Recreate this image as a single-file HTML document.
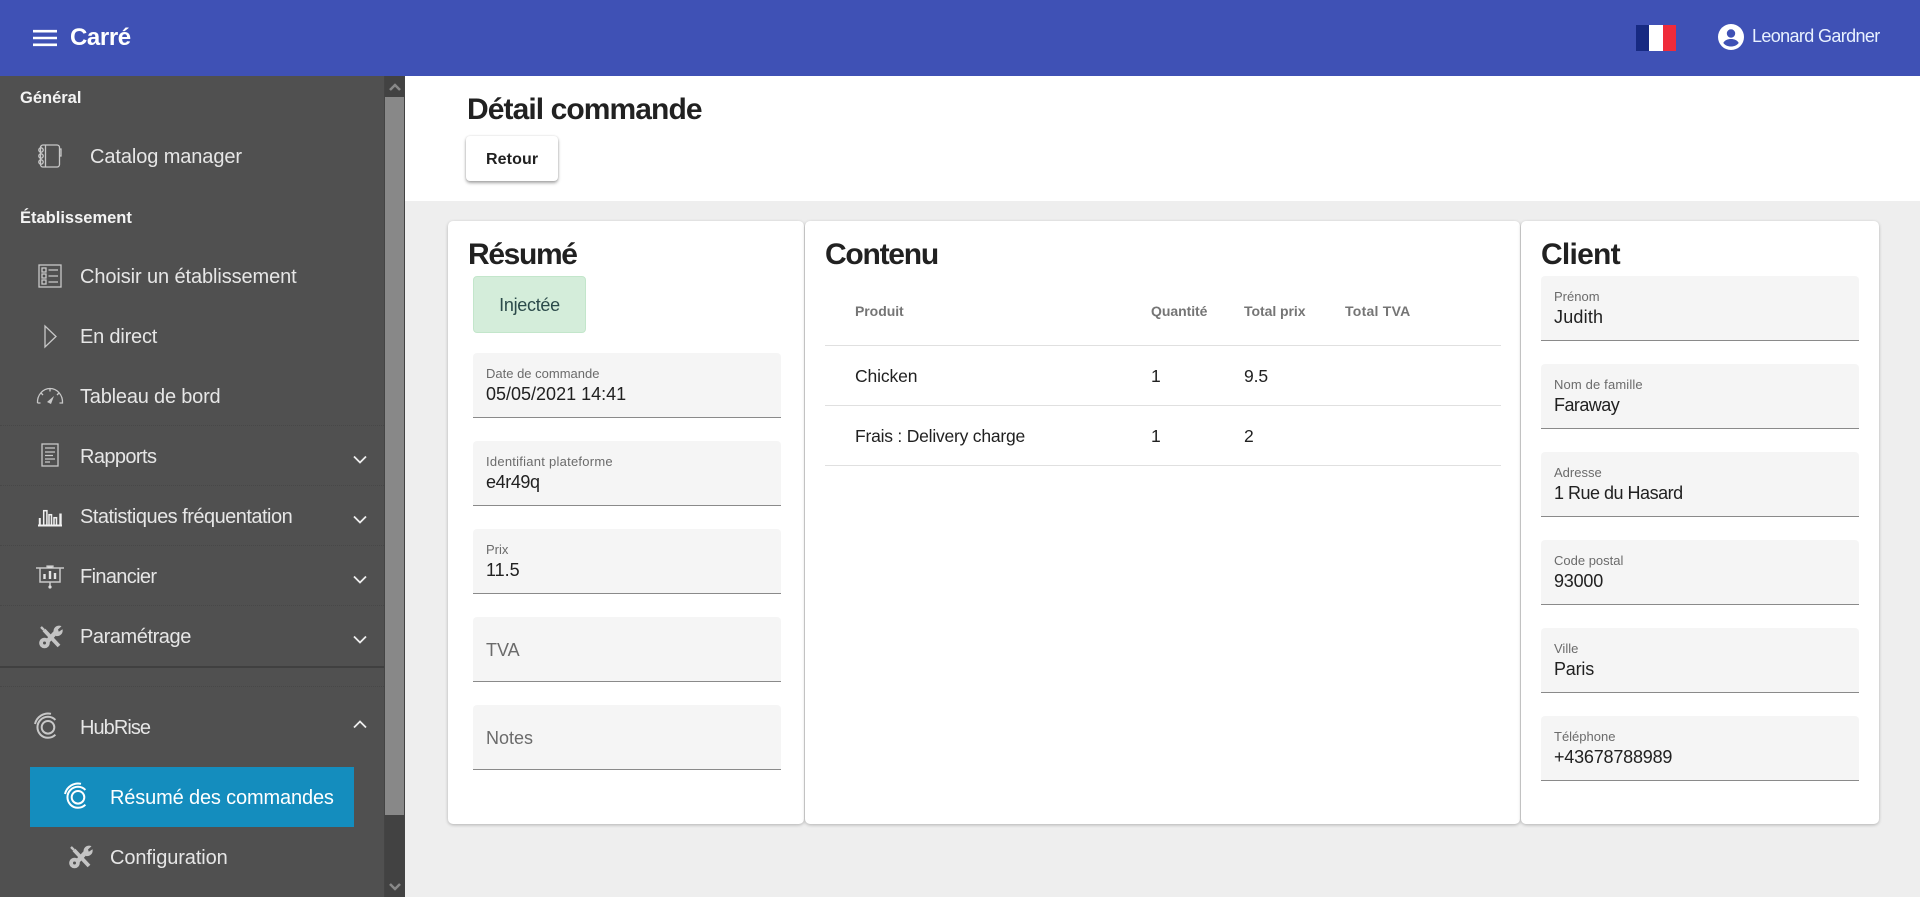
<!DOCTYPE html>
<html lang="fr"><head><meta charset="utf-8"><title>Détail commande</title>
<style>
html,body{margin:0;padding:0;width:1920px;height:897px;overflow:hidden;background:#eee;font-family:"Liberation Sans",Arial,sans-serif;color:#212121}
.a{position:absolute}
.t{position:absolute;white-space:nowrap;line-height:24px;height:24px}
.nav{color:#e6e6e6;font-size:20px;letter-spacing:-.1px}
.sec{color:#f4f4f4;font-size:16.5px;font-weight:bold;letter-spacing:0}
.dot{position:absolute;left:0;width:384px;height:0;border-top:1px dotted #474747}
.card{position:absolute;top:221px;height:603px;background:#fff;border-radius:5px;box-shadow:0 1px 3px rgba(0,0,0,.25)}
.h{font-size:30px;font-weight:bold;letter-spacing:-.75px;color:#212121;line-height:36px;height:36px}
.f{position:absolute;height:64px;background:#f5f5f5;border-radius:4px 4px 0 0;border-bottom:1px solid #8a8a8a}
.f .l{position:absolute;left:13px;top:13px;font-size:13px;line-height:16px;color:#6b6b6b;white-space:nowrap}
.f .v{position:absolute;left:13px;top:30px;font-size:18px;line-height:22px;color:#212121;white-space:nowrap}
.f .e{position:absolute;left:13px;top:21px;font-size:18px;line-height:24px;color:#6b6b6b}
.th{font-size:14px;font-weight:bold;color:#757575;letter-spacing:-.05px}
.td{font-size:17.5px;color:#212121;letter-spacing:-.12px}
.ln{position:absolute;left:825px;width:676px;height:1px;background:#e0e0e0}
svg{position:absolute;overflow:visible;fill:none}
.ic{stroke:#c8c8c8;stroke-width:1.3}
.dith{background-color:#444;background-image:radial-gradient(#3a3a3a 35%,transparent 40%);background-size:2px 2px}
</style></head><body>

<!-- top bar -->
<div class="a" style="left:0;top:0;width:1920px;height:76px;background:#3f51b5"></div>
<svg style="left:33px;top:30px" width="24" height="16"><path d="M0 1.2H24M0 8H24M0 14.8H24" stroke="#fff" stroke-width="2.6"/></svg>
<div class="t" style="left:70px;top:26px;font-size:24px;font-weight:bold;color:#fff;letter-spacing:-.4px">Carré</div>
<div class="a" style="left:1636px;top:25px;width:13px;height:26px;background:#172a82"></div>
<div class="a" style="left:1649px;top:25px;width:14px;height:26px;background:#fff"></div>
<div class="a" style="left:1663px;top:25px;width:13px;height:26px;background:#ef2b3a"></div>
<svg style="left:1718px;top:24px" width="26" height="26" viewBox="0 0 26 26"><circle cx="13" cy="13" r="13" fill="#fff"/><circle cx="13" cy="9.5" r="4.2" fill="#3f51b5"/><path d="M5.3 19c1.2-2.7 4.5-4 7.7-4s6.5 1.300 7.700 4c-1.700 2.200-4.500 3.500-7.700 3.500s-6-1.300-7.700-3.500z" fill="#3f51b5"/></svg>
<div class="t" style="left:1752px;top:24px;font-size:18px;color:#e8f1ff;letter-spacing:-.63px">Leonard Gardner</div>

<!-- sidebar -->
<div class="a" style="left:0;top:76px;width:384px;height:821px;background:#505050"></div>
<div class="a" style="left:384px;top:76px;width:1px;height:821px;background:#444"></div>
<div class="a dith" style="left:385px;top:76px;width:20px;height:821px"></div>
<div class="a" style="left:385px;top:97px;width:19px;height:718px;background:#888"></div>
<svg style="left:389px;top:83px" width="12" height="8"><path d="M1 7L6 2L11 7" stroke="#888" stroke-width="2.5"/></svg>
<svg style="left:389px;top:883px" width="12" height="8"><path d="M1 1L6 6L11 1" stroke="#888" stroke-width="2.5"/></svg>

<div class="t sec" style="left:20px;top:86px">Général</div>
<div class="t nav" style="left:90px;top:145px">Catalog manager</div>
<div class="t sec" style="left:20px;top:206px">Établissement</div>
<div class="t nav" style="left:80px;top:265px">Choisir un établissement</div>
<div class="t nav" style="left:80px;top:325px;letter-spacing:-.2px">En direct</div>
<div class="t nav" style="left:80px;top:385px;letter-spacing:-.2px">Tableau de bord</div>
<div class="dot" style="top:425px"></div>
<div class="t nav" style="left:80px;top:445px;letter-spacing:-.6px">Rapports</div>
<div class="dot" style="top:485px"></div>
<div class="t nav" style="left:80px;top:505px;letter-spacing:-.52px">Statistiques fréquentation</div>
<div class="dot" style="top:545px"></div>
<div class="t nav" style="left:80px;top:565px;letter-spacing:-.65px">Financier</div>
<div class="dot" style="top:605px"></div>
<div class="t nav" style="left:80px;top:625px;letter-spacing:-.43px">Paramétrage</div>
<div class="a" style="left:0;top:666px;width:384px;height:2px;background:#404040"></div>
<div class="dot" style="top:686px"></div>
<div class="t nav" style="left:80px;top:716px;letter-spacing:-.95px">HubRise</div>
<div class="a" style="left:30px;top:767px;width:324px;height:60px;background:#148dbe"></div>
<div class="t nav" style="left:110px;top:786px;color:#fff;letter-spacing:-.15px">Résumé des commandes</div>
<div class="t nav" style="left:110px;top:846px">Configuration</div>

<!-- chevrons -->
<svg style="left:353px;top:455px" width="14" height="9"><path d="M1 1.500L7 7.500L13 1.500" stroke="#eee" stroke-width="1.800"/></svg>
<svg style="left:353px;top:515px" width="14" height="9"><path d="M1 1.500L7 7.500L13 1.500" stroke="#eee" stroke-width="1.800"/></svg>
<svg style="left:353px;top:575px" width="14" height="9"><path d="M1 1.500L7 7.500L13 1.500" stroke="#eee" stroke-width="1.800"/></svg>
<svg style="left:353px;top:635px" width="14" height="9"><path d="M1 1.500L7 7.500L13 1.500" stroke="#eee" stroke-width="1.800"/></svg>
<svg style="left:353px;top:720px" width="14" height="9"><path d="M1 7.500L7 1.500L13 7.500" stroke="#eee" stroke-width="1.800"/></svg>

<!-- icons -->
<svg class="ic" style="left:38px;top:144px" width="24" height="24" viewBox="0 0 24 24" stroke-width="1.500"><rect x="2.500" y="1" width="19" height="22" rx="2.500"/><path d="M7.500 1V23M21.500 5h1.500v7h-1.500"/><circle cx="3" cy="6" r="2.200"/><circle cx="3" cy="12" r="2.200"/><circle cx="3" cy="18" r="2.200"/></svg>
<svg class="ic" style="left:38px;top:264px" width="24" height="24" viewBox="0 0 24 24" stroke-width="1.500"><rect x="1" y="1" width="22" height="22"/><rect x="4" y="4" width="4" height="4"/><rect x="4" y="10" width="4" height="4"/><rect x="4" y="16" width="4" height="4"/><path d="M10.500 6H20M10.500 12H20M10.500 18H20"/></svg>
<svg class="ic" style="left:44px;top:325px" width="13" height="23" viewBox="0 0 13 23" stroke-width="1.500"><path d="M1 1V22L12 11.500Z"/></svg>
<svg class="ic" style="left:36px;top:387px" width="28" height="17" viewBox="0 0 28 17" stroke-width="1.600"><path d="M1.500 16h3M1.500 16C1 8 7 1.500 14 1.500S27 8 26.500 16h-3M14 1.500v3M5 6l2 2M23 6l-2 2"/><path d="M11 15l7-6-3 8z" fill="#c8c8c8" stroke="none"/></svg>
<svg class="ic" style="left:41px;top:443px" width="18" height="24" viewBox="0 0 18 24" stroke-width="1.500"><rect x="1" y="1" width="16" height="22"/><path d="M4 5H14M4 9H14M4 12.500H12M4 16H14M4 19H9" stroke-width="1.300"/></svg>
<svg style="left:38px;top:509px" width="24" height="18" viewBox="0 0 24 18" stroke="#f0f0f0" stroke-width="1.500"><path d="M0 16.500H24" stroke-width="2"/><path d="M1.800 16V9" stroke-width="2"/><rect x="5.700" y="1.700" width="3.200" height="14.500"/><rect x="11" y="5.700" width="2.500" height="10.500"/><rect x="16" y="8.700" width="2.500" height="7.500"/><path d="M22.500 16V4.500" stroke-width="2.400"/></svg>
<svg class="ic" style="left:36px;top:565px" width="28" height="24" viewBox="0 0 28 24"><path d="M0 3H28" stroke-width="1.600"/><path d="M4 3V17H24V3M14 17V22" stroke-width="1.500"/><path d="M8.500 14V9M14 14V6M19 14V8" stroke-width="2.400" stroke="#e4e4e4"/><circle cx="14" cy="22" r="1.600" fill="#ddd" stroke="none"/><path d="M11 3V1h6v2" fill="#ddd"/></svg>
<svg style="left:39px;top:625px" width="24" height="24" viewBox="0 0 24 24"><path d="M2 2L5 5" stroke="#c4c4c4" stroke-width="2.400"/><path d="M5 5L20 21" stroke="#c4c4c4" stroke-width="3.800"/><path d="M5 20L18 6" stroke="#c4c4c4" stroke-width="4.600"/><path d="M14.500 6a5.500 5.500 0 0 1 8-4.800L19 4.500l.8 2.200 3.700-2.500A5.500 5.500 0 0 1 17 11" fill="#c4c4c4"/><circle cx="5.500" cy="18" r="5.300" fill="#c4c4c4"/><circle cx="5.500" cy="18" r="1.500" fill="#505050"/></svg>
<svg style="left:35px;top:712px" width="26" height="28" viewBox="0 0 26 28" stroke="#c8c8c8" stroke-width="2"><circle cx="13" cy="15.300" r="6.300"/><path d="M20.400 7.900A10.500 10.500 0 1 0 20.400 22.700M16 1.800A13.500 13.500 0 0 0 0 12"/></svg>
<svg style="left:65px;top:782px" width="26" height="28" viewBox="0 0 26 28" stroke="#fff" stroke-width="2"><circle cx="13" cy="15.300" r="6.300"/><path d="M20.400 7.900A10.500 10.500 0 1 0 20.400 22.700M16 1.800A13.500 13.500 0 0 0 0 12"/></svg>
<svg style="left:69px;top:845px" width="24" height="24" viewBox="0 0 24 24"><path d="M2 2L5 5" stroke="#c4c4c4" stroke-width="2.400"/><path d="M5 5L20 21" stroke="#c4c4c4" stroke-width="3.800"/><path d="M5 20L18 6" stroke="#c4c4c4" stroke-width="4.600"/><path d="M14.500 6a5.500 5.500 0 0 1 8-4.800L19 4.500l.8 2.200 3.700-2.500A5.500 5.500 0 0 1 17 11" fill="#c4c4c4"/><circle cx="5.500" cy="18" r="5.300" fill="#c4c4c4"/><circle cx="5.500" cy="18" r="1.500" fill="#505050"/></svg>

<!-- main header -->
<div class="a" style="left:405px;top:76px;width:1515px;height:125px;background:#fff"></div>
<div class="t h" style="left:467px;top:92px;letter-spacing:-.92px">Détail commande</div>
<div class="a" style="left:466px;top:136px;width:92px;height:45px;background:#fff;border-radius:4px;box-shadow:0 2px 3px rgba(0,0,0,.35),0 0 2px rgba(0,0,0,.12)"></div>
<div class="t" style="left:486px;top:148px;font-size:16px;font-weight:bold;color:#212121;letter-spacing:.1px">Retour</div>

<!-- Résumé card -->
<div class="card" style="left:448px;width:356px"></div>
<div class="t h" style="left:468px;top:237px;letter-spacing:-1.35px">Résumé</div>
<div class="a" style="left:473px;top:276px;width:111px;height:55px;background:#d4edda;border:1px solid #c3e6cb;border-radius:4px"></div>
<div class="t" style="left:473px;top:293px;width:113px;text-align:center;font-size:18px;color:#2b4a4a;letter-spacing:-.3px">Injectée</div>
<div class="f" style="left:473px;top:353px;width:308px"><div class="l">Date de commande</div><div class="v">05/05/2021 14:41</div></div>
<div class="f" style="left:473px;top:441px;width:308px"><div class="l" style="letter-spacing:.25px">Identifiant plateforme</div><div class="v" style="letter-spacing:-.4px">e4r49q</div></div>
<div class="f" style="left:473px;top:529px;width:308px"><div class="l">Prix</div><div class="v">11.5</div></div>
<div class="f" style="left:473px;top:617px;width:308px"><div class="e">TVA</div></div>
<div class="f" style="left:473px;top:705px;width:308px"><div class="e">Notes</div></div>

<!-- Contenu card -->
<div class="card" style="left:805px;width:715px"></div>
<div class="t h" style="left:825px;top:237px;letter-spacing:-1.25px">Contenu</div>
<div class="t th" style="left:855px;top:299px">Produit</div>
<div class="t th" style="left:1151px;top:299px">Quantité</div>
<div class="t th" style="left:1244px;top:299px">Total prix</div>
<div class="t th" style="left:1345px;top:299px;letter-spacing:.25px">Total TVA</div>
<div class="ln" style="top:345px"></div>
<div class="t td" style="left:855px;top:364px">Chicken</div>
<div class="t td" style="left:1151px;top:364px">1</div>
<div class="t td" style="left:1244px;top:364px">9.5</div>
<div class="ln" style="top:405px"></div>
<div class="t td" style="left:855px;top:424px;letter-spacing:-.22px">Frais : Delivery charge</div>
<div class="t td" style="left:1151px;top:424px">1</div>
<div class="t td" style="left:1244px;top:424px">2</div>
<div class="ln" style="top:465px"></div>

<!-- Client card -->
<div class="card" style="left:1521px;width:358px"></div>
<div class="t h" style="left:1541px;top:237px">Client</div>
<div class="f" style="left:1541px;top:276px;width:318px"><div class="l">Prénom</div><div class="v" style="letter-spacing:.2px">Judith</div></div>
<div class="f" style="left:1541px;top:364px;width:318px"><div class="l" style="letter-spacing:.15px">Nom de famille</div><div class="v" style="letter-spacing:-.55px">Faraway</div></div>
<div class="f" style="left:1541px;top:452px;width:318px"><div class="l">Adresse</div><div class="v" style="letter-spacing:-.5px">1 Rue du Hasard</div></div>
<div class="f" style="left:1541px;top:540px;width:318px"><div class="l">Code postal</div><div class="v" style="letter-spacing:-.2px">93000</div></div>
<div class="f" style="left:1541px;top:628px;width:318px"><div class="l">Ville</div><div class="v" style="letter-spacing:-.2px">Paris</div></div>
<div class="f" style="left:1541px;top:716px;width:318px"><div class="l">Téléphone</div><div class="v" style="letter-spacing:-.2px">+43678788989</div></div>

</body></html>
